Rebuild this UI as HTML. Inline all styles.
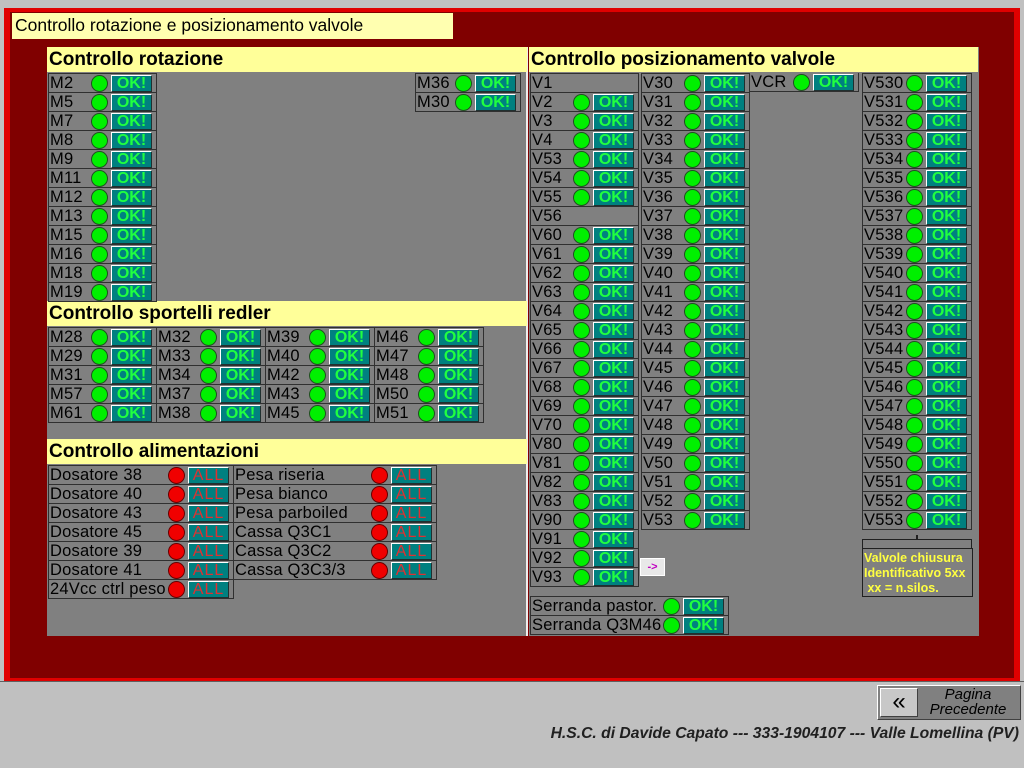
<!DOCTYPE html>
<html><head><meta charset="utf-8"><style>
*{box-sizing:border-box;margin:0;padding:0}
body{width:1024px;height:768px;background:#c0c0c0;position:relative;overflow:hidden;font-family:"Liberation Sans",sans-serif}
.a{position:absolute}
.col{position:absolute;border-left:1px solid #303030;border-top:1px solid #303030}
.c{position:relative;height:19px;border-right:1px solid #303030;border-bottom:1px solid #303030;font-size:16.5px;line-height:18px;padding-left:1px;color:#000;white-space:nowrap;letter-spacing:0.2px}
.c i{position:absolute;right:48px;top:1px;width:17px;height:17px;border-radius:50%;background:#00f000;border:1px solid #205020}
.c b{position:absolute;right:4px;top:1px;width:41px;height:17px;background:#008080;border-top:1px solid #fff;border-left:1px solid #fff;border-right:1px solid #203030;border-bottom:1px solid #203030;color:#20ff40;font-size:16px;line-height:15px;text-align:center;font-weight:bold;letter-spacing:0}
.r i{background:#f00000;border-color:#600}
.r b{color:#e03030;font-weight:normal;letter-spacing:1px}
.h{position:absolute;background:#ffff99;font-weight:bold;font-size:19px;line-height:25px;padding-left:2px;height:25px}
.p{position:absolute;background:#808080}
</style></head><body>
<div class="a" style="left:4px;top:8px;width:1016px;height:674px;background:#e00000"></div>
<div class="a" style="left:10px;top:12px;width:1004px;height:666px;background:#800000"></div>
<div class="a" style="left:12px;top:13px;width:441px;height:26px;background:#ffffb0;font-size:17.5px;line-height:25px;padding-left:3px">Controllo rotazione e posizionamento valvole</div>
<div class="a" style="left:0;top:681px;width:1024px;height:1px;background:#606060"></div>

<div class="p" style="left:47px;top:47px;width:481px;height:589px;border-right:2px solid #eee"></div>
<div class="p" style="left:529px;top:47px;width:450px;height:589px"></div>
<div class="h" style="left:47px;top:47px;width:480px">Controllo rotazione</div>
<div class="h" style="left:47px;top:301px;width:480px">Controllo sportelli redler</div>
<div class="h" style="left:47px;top:439px;width:480px">Controllo alimentazioni</div>
<div class="h" style="left:529px;top:47px;width:449px">Controllo posizionamento valvole</div>

<div class="col" style="left:48px;top:73px;width:109px">
<div class="c">M2<i></i><b>OK!</b></div><div class="c">M5<i></i><b>OK!</b></div><div class="c">M7<i></i><b>OK!</b></div><div class="c">M8<i></i><b>OK!</b></div><div class="c">M9<i></i><b>OK!</b></div><div class="c">M11<i></i><b>OK!</b></div><div class="c">M12<i></i><b>OK!</b></div><div class="c">M13<i></i><b>OK!</b></div><div class="c">M15<i></i><b>OK!</b></div><div class="c">M16<i></i><b>OK!</b></div><div class="c">M18<i></i><b>OK!</b></div><div class="c">M19<i></i><b>OK!</b></div></div>
<div class="col" style="left:415px;top:73px;width:106px">
<div class="c">M36<i></i><b>OK!</b></div><div class="c">M30<i></i><b>OK!</b></div></div>

<div class="col" style="left:48px;top:327px;width:109px">
<div class="c">M28<i></i><b>OK!</b></div><div class="c">M29<i></i><b>OK!</b></div><div class="c">M31<i></i><b>OK!</b></div><div class="c">M57<i></i><b>OK!</b></div><div class="c">M61<i></i><b>OK!</b></div></div>
<div class="col" style="left:157px;top:327px;width:109px;border-left:0">
<div class="c">M32<i></i><b>OK!</b></div><div class="c">M33<i></i><b>OK!</b></div><div class="c">M34<i></i><b>OK!</b></div><div class="c">M37<i></i><b>OK!</b></div><div class="c">M38<i></i><b>OK!</b></div></div>
<div class="col" style="left:266px;top:327px;width:109px;border-left:0">
<div class="c">M39<i></i><b>OK!</b></div><div class="c">M40<i></i><b>OK!</b></div><div class="c">M42<i></i><b>OK!</b></div><div class="c">M43<i></i><b>OK!</b></div><div class="c">M45<i></i><b>OK!</b></div></div>
<div class="col" style="left:375px;top:327px;width:109px;border-left:0">
<div class="c">M46<i></i><b>OK!</b></div><div class="c">M47<i></i><b>OK!</b></div><div class="c">M48<i></i><b>OK!</b></div><div class="c">M50<i></i><b>OK!</b></div><div class="c">M51<i></i><b>OK!</b></div></div>

<div class="col r" style="left:48px;top:465px;width:186px">
<div class="c">Dosatore 38<i></i><b>ALL</b></div><div class="c">Dosatore 40<i></i><b>ALL</b></div><div class="c">Dosatore 43<i></i><b>ALL</b></div><div class="c">Dosatore 45<i></i><b>ALL</b></div><div class="c">Dosatore 39<i></i><b>ALL</b></div><div class="c">Dosatore 41<i></i><b>ALL</b></div><div class="c">24Vcc ctrl peso<i></i><b>ALL</b></div></div>
<div class="col r" style="left:234px;top:465px;width:203px;border-left:0">
<div class="c">Pesa riseria<i></i><b>ALL</b></div><div class="c">Pesa bianco<i></i><b>ALL</b></div><div class="c">Pesa parboiled<i></i><b>ALL</b></div><div class="c">Cassa Q3C1<i></i><b>ALL</b></div><div class="c">Cassa Q3C2<i></i><b>ALL</b></div><div class="c">Cassa Q3C3/3<i></i><b>ALL</b></div></div>

<div class="col" style="left:530px;top:73px;width:109px">
<div class="c">V1</div><div class="c">V2<i></i><b>OK!</b></div><div class="c">V3<i></i><b>OK!</b></div><div class="c">V4<i></i><b>OK!</b></div><div class="c">V53<i></i><b>OK!</b></div><div class="c">V54<i></i><b>OK!</b></div><div class="c">V55<i></i><b>OK!</b></div><div class="c">V56</div><div class="c">V60<i></i><b>OK!</b></div><div class="c">V61<i></i><b>OK!</b></div><div class="c">V62<i></i><b>OK!</b></div><div class="c">V63<i></i><b>OK!</b></div><div class="c">V64<i></i><b>OK!</b></div><div class="c">V65<i></i><b>OK!</b></div><div class="c">V66<i></i><b>OK!</b></div><div class="c">V67<i></i><b>OK!</b></div><div class="c">V68<i></i><b>OK!</b></div><div class="c">V69<i></i><b>OK!</b></div><div class="c">V70<i></i><b>OK!</b></div><div class="c">V80<i></i><b>OK!</b></div><div class="c">V81<i></i><b>OK!</b></div><div class="c">V82<i></i><b>OK!</b></div><div class="c">V83<i></i><b>OK!</b></div><div class="c">V90<i></i><b>OK!</b></div><div class="c">V91<i></i><b>OK!</b></div><div class="c">V92<i></i><b>OK!</b></div><div class="c">V93<i></i><b>OK!</b></div></div>
<div class="col" style="left:641px;top:73px;width:109px">
<div class="c">V30<i></i><b>OK!</b></div><div class="c">V31<i></i><b>OK!</b></div><div class="c">V32<i></i><b>OK!</b></div><div class="c">V33<i></i><b>OK!</b></div><div class="c">V34<i></i><b>OK!</b></div><div class="c">V35<i></i><b>OK!</b></div><div class="c">V36<i></i><b>OK!</b></div><div class="c">V37<i></i><b>OK!</b></div><div class="c">V38<i></i><b>OK!</b></div><div class="c">V39<i></i><b>OK!</b></div><div class="c">V40<i></i><b>OK!</b></div><div class="c">V41<i></i><b>OK!</b></div><div class="c">V42<i></i><b>OK!</b></div><div class="c">V43<i></i><b>OK!</b></div><div class="c">V44<i></i><b>OK!</b></div><div class="c">V45<i></i><b>OK!</b></div><div class="c">V46<i></i><b>OK!</b></div><div class="c">V47<i></i><b>OK!</b></div><div class="c">V48<i></i><b>OK!</b></div><div class="c">V49<i></i><b>OK!</b></div><div class="c">V50<i></i><b>OK!</b></div><div class="c">V51<i></i><b>OK!</b></div><div class="c">V52<i></i><b>OK!</b></div><div class="c">V53<i></i><b>OK!</b></div></div>
<div class="col" style="left:750px;top:73px;width:109px;border-top:0;border-left:0">
<div class="c">VCR<i></i><b>OK!</b></div></div>
<div class="col" style="left:862px;top:73px;width:110px">
<div class="c">V530<i></i><b>OK!</b></div><div class="c">V531<i></i><b>OK!</b></div><div class="c">V532<i></i><b>OK!</b></div><div class="c">V533<i></i><b>OK!</b></div><div class="c">V534<i></i><b>OK!</b></div><div class="c">V535<i></i><b>OK!</b></div><div class="c">V536<i></i><b>OK!</b></div><div class="c">V537<i></i><b>OK!</b></div><div class="c">V538<i></i><b>OK!</b></div><div class="c">V539<i></i><b>OK!</b></div><div class="c">V540<i></i><b>OK!</b></div><div class="c">V541<i></i><b>OK!</b></div><div class="c">V542<i></i><b>OK!</b></div><div class="c">V543<i></i><b>OK!</b></div><div class="c">V544<i></i><b>OK!</b></div><div class="c">V545<i></i><b>OK!</b></div><div class="c">V546<i></i><b>OK!</b></div><div class="c">V547<i></i><b>OK!</b></div><div class="c">V548<i></i><b>OK!</b></div><div class="c">V549<i></i><b>OK!</b></div><div class="c">V550<i></i><b>OK!</b></div><div class="c">V551<i></i><b>OK!</b></div><div class="c">V552<i></i><b>OK!</b></div><div class="c">V553<i></i><b>OK!</b></div></div>

<div class="a" style="left:862px;top:539px;width:110px;height:9px;border:1px solid #202020;border-bottom:0"></div>
<div class="a" style="left:916px;top:535px;width:2px;height:4px;background:#202020"></div>
<div class="a" style="left:862px;top:548px;width:111px;height:49px;border:1px solid #202020;background:#808080;color:#ffff40;font-weight:bold;font-size:12.5px;line-height:15px;padding:2px 0 0 1px">Valvole chiusura<br>Identificativo 5xx<br>&nbsp;xx = n.silos.</div>
<div class="a" style="left:640px;top:558px;width:25px;height:18px;background:#e8e8e8;border:1px solid #fff;color:#c000c0;font-size:11px;font-weight:bold;line-height:16px;text-align:center">-&gt;</div>

<div class="col" style="left:530px;top:596px;width:199px">
<div class="c">Serranda pastor.<i></i><b>OK!</b></div><div class="c">Serranda Q3M46<i></i><b>OK!</b></div></div>

<div class="a" style="left:877px;top:685px;width:144px;height:35px;background:#808080;border:1px solid #fff;border-right-color:#404040;border-bottom-color:#404040"></div>
<div class="a" style="left:880px;top:688px;width:38px;height:29px;background:#c8c8c8;border:1px solid #fff;border-right-color:#404040;border-bottom-color:#404040;font-size:24px;line-height:25px;text-align:center">«</div>
<div class="a" style="left:918px;top:687px;width:100px;font-style:italic;font-size:15px;line-height:15px;text-align:center">Pagina<br>Precedente</div>
<div class="a" style="right:5px;top:725px;font-style:italic;font-weight:bold;font-size:15.7px;color:#202020">H.S.C. di Davide Capato --- 333-1904107 --- Valle Lomellina (PV)</div>
</body></html>
